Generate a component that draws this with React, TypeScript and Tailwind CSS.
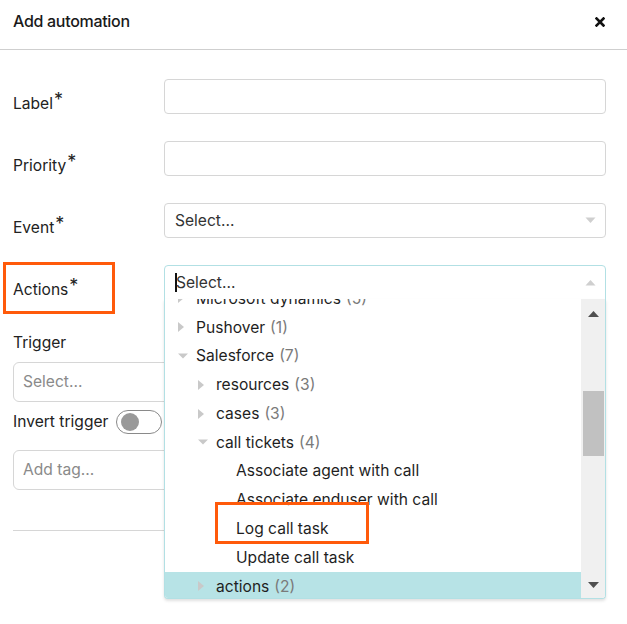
import React from "react";

type Row = { label: string; count?: number; level: number; kind: "closed" | "open" | "leaf"; active?: boolean };

const rows: Row[] = [
  { label: "Microsoft dynamics", count: 5, level: 0, kind: "closed" },
  { label: "Pushover", count: 1, level: 0, kind: "closed" },
  { label: "Salesforce", count: 7, level: 0, kind: "open" },
  { label: "resources", count: 3, level: 1, kind: "closed" },
  { label: "cases", count: 3, level: 1, kind: "closed" },
  { label: "call tickets", count: 4, level: 1, kind: "open" },
  { label: "Associate agent with call", level: 2, kind: "leaf" },
  { label: "Associate enduser with call", level: 2, kind: "leaf" },
  { label: "Log call task", level: 2, kind: "leaf" },
  { label: "Update call task", level: 2, kind: "leaf" },
  { label: "actions", count: 2, level: 1, kind: "closed", active: true },
];

function Arrow({ kind }: { kind: "closed" | "open" }) {
  if (kind === "closed")
    return (
      <svg width="8" height="12" viewBox="0 0 8 12" className="shrink-0">
        <path d="M1 1 L7 6 L1 11 Z" fill="#c9c9c9" />
      </svg>
    );
  return (
    <svg width="12" height="8" viewBox="0 0 12 8" className="shrink-0">
      <path d="M1 1.5 L11 1.5 L6 6.5 Z" fill="#c9c9c9" />
    </svg>
  );
}

function MenuRow({ r }: { r: Row }) {
  const pad = 12 + r.level * 20;
  return (
    <div
      className={`relative flex h-[28.8px] items-center whitespace-nowrap ${r.active ? "bg-[#b7e3e6]" : ""}`}
      style={{ paddingLeft: pad }}
    >
      <div className="flex w-[19px] shrink-0 items-center">
        {r.kind !== "leaf" && <Arrow kind={r.kind} />}
      </div>
      <span className="text-[#1f1f1f]">{r.label}</span>
      {r.count !== undefined && <span className="ml-[5px] text-[#7a7a7a]">({r.count})</span>}
      {r.label === "Log call task" && (
        <span className="pointer-events-none absolute left-[50px] top-[-12px] h-[42px] w-[154px] border-[3px] border-[#ff5a0a]" />
      )}
    </div>
  );
}

function Label({ text }: { text: string }) {
  return (
    <div className="w-[151px] shrink-0 pt-[14px] leading-[22px] text-[#222]">
      {text}
      <span className="relative top-[-3px] ml-[1px] text-[18px] leading-[10px]">*</span>
    </div>
  );
}

export default function App() {
  return (
    <div
      className="relative h-[624px] w-[627px] overflow-hidden bg-white text-[15.6px] text-[#222]"
      style={{ fontFamily: "Inter, 'Noto Sans', sans-serif" }}
    >
      {/* Header */}
      <div className="flex h-[50px] items-start justify-between border-b border-[#cfcfcf] px-[13px] pt-[10px]">
        <div className="text-[16px] font-medium leading-[22px] tracking-[-0.3px] text-[#1a1a1a]">Add automation</div>
        <svg width="10" height="10" viewBox="0 0 10 10" className="mr-[9px] mt-[7px]">
          <path d="M1.5 1.5 L8.5 8.5 M8.5 1.5 L1.5 8.5" stroke="#111" strokeWidth="2.6" strokeLinecap="square" />
        </svg>
      </div>

      {/* Form */}
      <div className="flex flex-col pl-[13px] pr-[21px] pt-[29px]">
        <div className="flex flex-col gap-[27px]">
          <div className="flex h-[35px] items-start">
            <Label text="Label" />
            <div className="h-[35px] flex-1 rounded-[4px] border border-[#d6d6d6]" />
          </div>
          <div className="flex h-[35px] items-start">
            <Label text="Priority" />
            <div className="h-[35px] flex-1 rounded-[4px] border border-[#d6d6d6]" />
          </div>
          <div className="flex h-[35px] items-start">
            <Label text="Event" />
            <div className="flex h-[35px] flex-1 items-center justify-between rounded-[4px] border border-[#d6d6d6] pl-[10px] pr-[9px]">
              <span className="text-[#333]">Select...</span>
              <svg width="11" height="7" viewBox="0 0 11 7">
                <path d="M0.5 0.5 L10.5 0.5 L5.5 6 Z" fill="#cfcfcf" />
              </svg>
            </div>
          </div>
          <div className="relative flex h-[35px] items-start">
            <span className="pointer-events-none absolute left-[-10px] top-[-3px] h-[52px] w-[112px] border-[3px] border-[#ff5a0a]" />
            <Label text="Actions" />
            <div className="relative z-10 flex-1">
              <div className="flex h-[35px] items-center justify-between rounded-t-[4px] border border-[#b2e0e4] pl-[10px] pr-[9px]">
                <span className="flex items-center text-[#333]">
                  <span className="mr-[-1px] h-[19px] w-[2px] bg-[#111]" />
                  Select...
                </span>
                <svg width="11" height="7" viewBox="0 0 11 7">
                  <path d="M0.5 6.5 L10.5 6.5 L5.5 1 Z" fill="#cfcfcf" />
                </svg>
              </div>
              {/* Menu */}
              <div className="absolute left-0 right-0 top-[34px] flex h-[300px] overflow-hidden rounded-b-[4px] border border-t-0 border-[#b2e0e4] bg-white shadow-[0_2px_3px_rgba(0,0,0,0.12)]">
                <div className="flex-1 overflow-hidden">
                  <div className="mt-[-15px]">
                    {rows.map((r) => (
                      <MenuRow key={r.label} r={r} />
                    ))}
                  </div>
                </div>
                <div className="flex w-[24px] shrink-0 flex-col items-center bg-[#f0f0f0] pt-[12px]">
                  <svg width="11" height="6" viewBox="0 0 11 6">
                    <path d="M0 6 L11 6 L5.5 0 Z" fill="#505050" />
                  </svg>
                  <div className="mt-[74px] h-[65px] w-[21px] bg-[#c1c1c1]" />
                  <div className="flex-1" />
                  <svg width="11" height="6" viewBox="0 0 11 6" className="mb-[10px]">
                    <path d="M0 0 L11 0 L5.5 6 Z" fill="#505050" />
                  </svg>
                </div>
              </div>
            </div>
          </div>
        </div>

        {/* Trigger */}
        <div className="mt-[32px] leading-[22px]">Trigger</div>
        <div className="mt-[8px] flex h-[40px] items-center rounded-[6px] border border-[#d6d6d6] pl-[9px] text-[#8a8a8a]">
          Select...
        </div>
        <div className="mt-[8px] flex h-[24px] items-center">
          <span className="leading-[22px]">Invert trigger</span>
          <div className="ml-[8px] flex h-[24px] w-[46px] items-center rounded-full border border-[#8a8a8a] pl-[4px]">
            <div className="h-[18px] w-[18px] rounded-full bg-[#999]" />
          </div>
        </div>
        <div className="mt-[16px] flex h-[40px] items-center rounded-[6px] border border-[#d6d6d6] pl-[9px] text-[#8a8a8a]">
          Add tag...
        </div>
        <div className="mt-[40px] h-px bg-[#d6d6d6]" />
      </div>
    </div>
  );
}
